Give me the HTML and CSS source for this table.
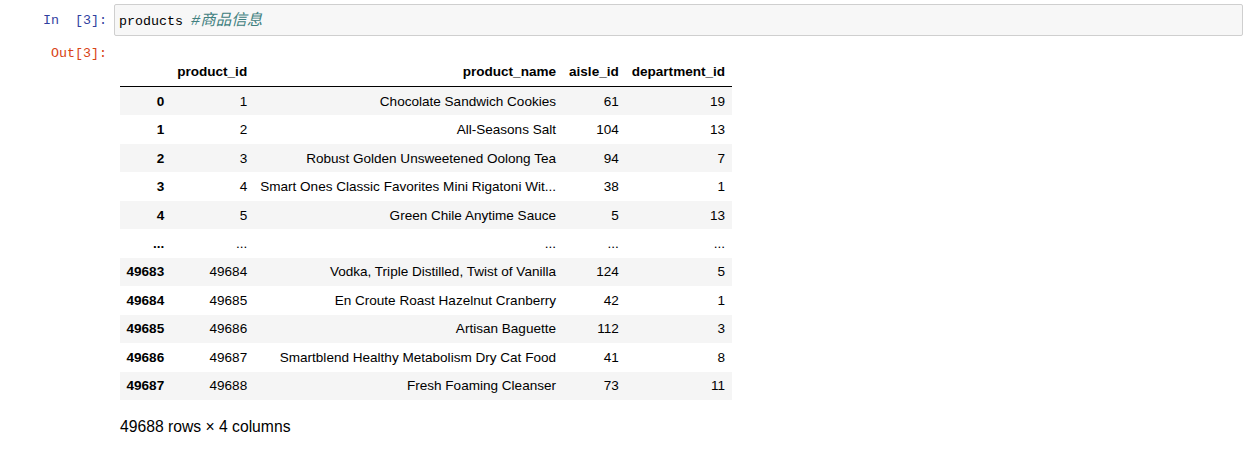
FILE: index.html
```html
<!DOCTYPE html>
<html>
<head>
<meta charset="utf-8">
<link rel="stylesheet" href="styles.css">
</head>
<body>
<div class="cell">
  <div class="row input-row">
    <div class="prompt in-prompt">In&nbsp;&nbsp;[3]:</div>
    <div class="input-box"><span class="code">products </span><span class="comment">#商品信息</span></div>
  </div>
  <div class="row output-row">
    <div class="prompt out-prompt">Out[3]:</div>
    <div class="output">
      <table class="df">
        <thead>
          <tr><th></th><th>product_id</th><th>product_name</th><th>aisle_id</th><th>department_id</th></tr>
        </thead>
        <tbody>
          <tr><th>0</th><td>1</td><td>Chocolate Sandwich Cookies</td><td>61</td><td>19</td></tr>
          <tr><th>1</th><td>2</td><td>All-Seasons Salt</td><td>104</td><td>13</td></tr>
          <tr><th>2</th><td>3</td><td>Robust Golden Unsweetened Oolong Tea</td><td>94</td><td>7</td></tr>
          <tr><th>3</th><td>4</td><td>Smart Ones Classic Favorites Mini Rigatoni Wit...</td><td>38</td><td>1</td></tr>
          <tr><th>4</th><td>5</td><td>Green Chile Anytime Sauce</td><td>5</td><td>13</td></tr>
          <tr><th>...</th><td>...</td><td>...</td><td>...</td><td>...</td></tr>
          <tr><th>49683</th><td>49684</td><td>Vodka, Triple Distilled, Twist of Vanilla</td><td>124</td><td>5</td></tr>
          <tr><th>49684</th><td>49685</td><td>En Croute Roast Hazelnut Cranberry</td><td>42</td><td>1</td></tr>
          <tr><th>49685</th><td>49686</td><td>Artisan Baguette</td><td>112</td><td>3</td></tr>
          <tr><th>49686</th><td>49687</td><td>Smartblend Healthy Metabolism Dry Cat Food</td><td>41</td><td>8</td></tr>
          <tr><th>49687</th><td>49688</td><td>Fresh Foaming Cleanser</td><td>73</td><td>11</td></tr>
        </tbody>
      </table>
      <p class="shape">49688 rows × 4 columns</p>
    </div>
  </div>
</div>
</body>
</html>
```
FILE: styles.css
```css
html, body {
  margin: 0;
  padding: 0;
  background: #ffffff;
}

.cell {
  padding-top: 4px;
}

.row {
  display: flex;
  align-items: flex-start;
}

.prompt {
  width: 107px;
  flex: 0 0 107px;
  padding-right: 7px;
  text-align: right;
  font-family: "Liberation Mono", "DejaVu Sans Mono", monospace;
  font-size: 13.33px;
  white-space: nowrap;
}

.in-prompt {
  color: #303F9F;
  line-height: 31px;
  padding-top: 1px;
}

.out-prompt {
  color: #D84315;
  line-height: 17px;
  padding-top: 5px;
}

.input-box {
  flex: none;
  width: 1119px;
  height: 29px;
  background: #f7f7f7;
  border: 1px solid #cfcfcf;
  border-radius: 2px;
  padding: 1px 4px 0 4px;
  line-height: 30px;
  font-family: "Liberation Mono", "DejaVu Sans Mono", monospace;
  font-size: 13.33px;
  color: #000;
  white-space: pre;
  overflow: hidden;
}

.comment {
  color: #408080;
  font-style: italic;
  font-family: "Liberation Mono", "Noto Sans CJK SC", monospace;
  font-size: 15.5px;
}

.output-row {
  margin-top: 4px;
}

.output {
  padding: 17.5px 0 0 6px;
}

.df {
  border-collapse: collapse;
  border-spacing: 0;
  font-family: "Liberation Sans", Arial, sans-serif;
  font-size: 13.55px;
  color: #000;
}

.df th,
.df td {
  padding: 6.6px 6.5px;
  line-height: 15.3px;
  text-align: right;
  vertical-align: middle;
  white-space: nowrap;
}

.df th {
  font-weight: bold;
}

.df thead th {
  border-bottom: 1px solid #000;
}

.df tbody tr:nth-child(odd) {
  background: #f5f5f5;
}

.shape {
  margin: 17px 0 0 0;
  font-family: "Liberation Sans", Arial, sans-serif;
  font-size: 15.7px;
  line-height: 20px;
  color: #000;
}
```
